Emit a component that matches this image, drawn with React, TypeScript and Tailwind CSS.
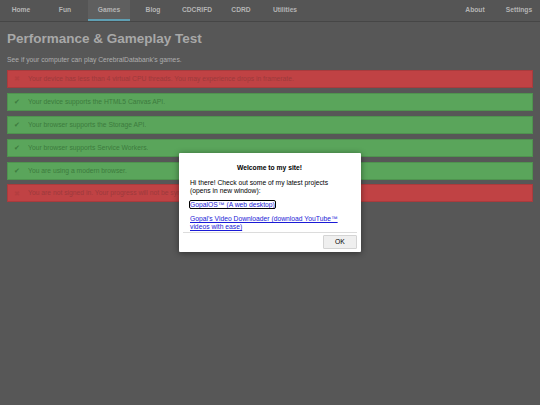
import React from "react";

const font = { fontFamily: '"Liberation Sans", Arial, sans-serif' };

const leftTabs = ["Home", "Fun", "Games", "Blog", "CDCRIFD", "CDRD", "Utilities"];
const rightTabs = ["About", "Settings"];

type Check = { ok: boolean; text: string };
const checks: Check[] = [
  { ok: false, text: "Your device has less than 4 virtual CPU threads. You may experience drops in framerate." },
  { ok: true, text: "Your device supports the HTML5 Canvas API." },
  { ok: true, text: "Your browser supports the Storage API." },
  { ok: true, text: "Your browser supports Service Workers." },
  { ok: true, text: "You are using a modern browser." },
  { ok: false, text: "You are not signed in. Your progress will not be synced across devices." },
];

function Tab({ label, active }: { label: string; active?: boolean }) {
  return (
    <div
      className={
        active
          ? "w-[42px] h-[21px] flex items-center justify-center bg-[#5f5f5f] border-b-2 border-[#5f9fb3] pt-[2px] text-[6.7px] font-bold text-[#b4b4b4]"
          : "w-[42px] h-[21px] flex items-center justify-center text-[6.7px] font-bold text-[#b4b4b4]"
      }
    >
      {label}
    </div>
  );
}

export default function App() {
  return (
    <div style={font} className="relative w-[540px] h-[405px] bg-[#575757] overflow-hidden">
      <nav className="flex justify-between h-[22px] bg-[#555555] border-b border-[#464646]">
        <div className="flex gap-[2px]">
          {leftTabs.map((t) => (
            <Tab key={t} label={t} active={t === "Games"} />
          ))}
        </div>
        <div className="flex gap-[2px]">
          {rightTabs.map((t) => (
            <Tab key={t} label={t} />
          ))}
        </div>
      </nav>

      <main className="px-[7px]">
        <h1 className="mt-[9px] text-[13.5px] leading-[16px] font-bold text-[#a8a8a8]">
          Performance &amp; Gameplay Test
        </h1>
        <p className="mt-[9px] text-[6.75px] leading-[8px] text-[#adadad]">
          See if your computer can play CerebralDatabank's games.
        </p>
        <div className="mt-[6px] flex flex-col gap-[4.9px]">
          {checks.map((c, i) => (
            <div
              key={i}
              className={
                c.ok
                  ? "h-[18px] flex items-center border border-[#4f934f] bg-[#5aa55b] text-[6.75px] text-[#3d7b3e]"
                  : "h-[18px] flex items-center border border-[#a93b3d] bg-[#c04244] text-[6.75px] text-[#9c3a3c]"
              }
            >
              <span className={c.ok ? "w-[20px] pl-[6px] text-[6.5px]" : "w-[20px] pl-[6px] text-[6.5px] text-[#b43e40]"}>
                {c.ok ? "✔" : "✖"}
              </span>
              <span className="whitespace-nowrap overflow-hidden">{c.text}</span>
            </div>
          ))}
        </div>
      </main>

      <div className="absolute left-[179px] top-[153px] w-[182px] h-[99px] bg-white rounded-[1px] shadow-[0_1px_6px_rgba(0,0,0,0.45)] flex flex-col text-black">
        <div className="pl-[11px] pr-[12px] pt-[11px]">
          <div className="text-center text-[6.75px] leading-[8px] font-bold">Welcome to my site!</div>
          <p className="mt-[6.5px] text-[6.75px] leading-[8px]">
            Hi there! Check out some of my latest projects (opens in new window):
          </p>
          <div className="mt-[6.5px] text-[6.75px] leading-[8px]">
            <a className="text-[#1a1ad6] underline outline outline-1 outline-black rounded-[1px]" href="#">
              GopalOS™ (A web desktop)
            </a>
          </div>
          <div className="mt-[6px] text-[6.75px] leading-[8px]">
            <a className="text-[#1a1ad6] underline" href="#">
              Gopal's Video Downloader (download YouTube™ videos with ease)
            </a>
          </div>
        </div>
        <div className="mx-[4px] mt-[0.5px] border-t border-[#dcdcdc]" />
        <div className="flex justify-end px-[4px] pt-[2.5px]">
          <button className="w-[34px] h-[14px] bg-[#efefef] border border-[#d4d4d4] rounded-[1px] text-[6.75px] text-black">
            OK
          </button>
        </div>
      </div>
    </div>
  );
}
